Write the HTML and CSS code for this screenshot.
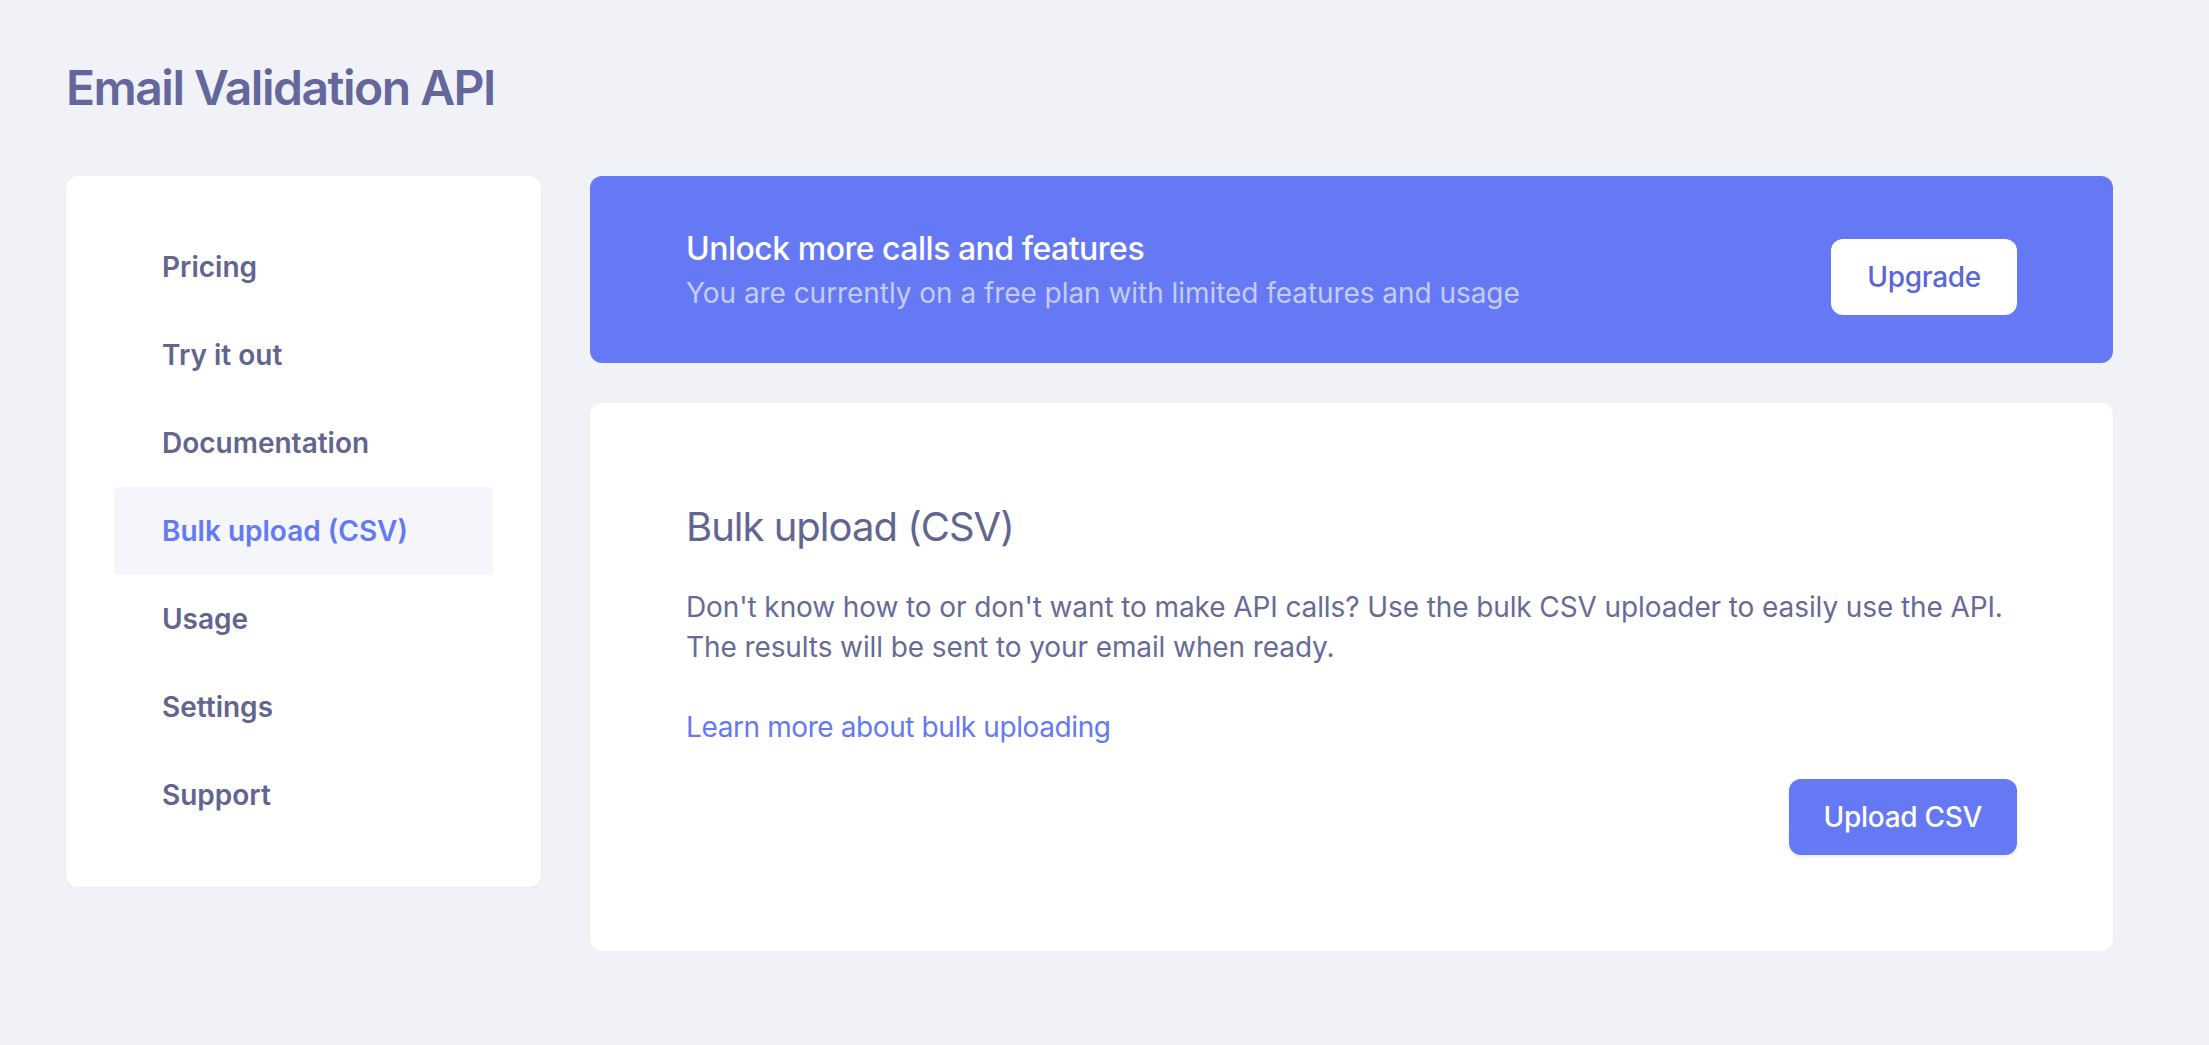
FILE: index.html
```html
<!DOCTYPE html>
<html lang="en">

<head>
  <meta charset="UTF-8">
  <meta name="viewport" content="width=device-width, initial-scale=1.0">
  <title>Email Validation API</title>
  <link rel="stylesheet" href="styles.css">
</head>

<body>
  <div class="page">
    <h1 class="page-title">Email Validation API</h1>

    <div class="layout">
      <nav class="sidebar">
        <a class="nav-item" href="#">Pricing</a>
        <a class="nav-item" href="#">Try it out</a>
        <a class="nav-item" href="#">Documentation</a>
        <a class="nav-item active" href="#">Bulk upload (CSV)</a>
        <a class="nav-item" href="#">Usage</a>
        <a class="nav-item" href="#">Settings</a>
        <a class="nav-item" href="#">Support</a>
      </nav>

      <div class="main">
        <div class="upgrade-banner">
          <div>
            <div class="banner-title">Unlock more calls and features</div>
            <div class="banner-text">You are currently on a free plan with limited features and usage</div>
          </div>
          <button class="btn-upgrade">Upgrade</button>
        </div>

        <div class="card">
          <h2 class="card-title">Bulk upload (CSV)</h2>
          <p class="card-text">
            Don't know how to or don't want to make API calls? Use the bulk CSV uploader to easily use the API.<br>
            The results will be sent to your email when ready.
          </p>
          <a class="card-link" href="#">Learn more about bulk uploading</a>
          <div class="card-actions">
            <button class="btn-primary">Upload CSV</button>
          </div>
        </div>
      </div>
    </div>
  </div>
</body>

</html>
```

FILE: styles.css
```css
body {
  margin: 0;
  background-color: #f0f2f7;
  font-family: "Inter", "Noto Sans", sans-serif;
  color: #62668f;
}

.page {
  width: 2047px;
  padding: 56px 0 0 66px;
}

.page-title {
  margin: 0 0 56px;
  font-size: 48px;
  line-height: 64px;
  font-weight: 600;
  letter-spacing: -1.5px;
  color: #63679a;
}

.layout {
  display: flex;
  align-items: flex-start;
  gap: 49px;
}

/* Sidebar */
.sidebar {
  width: 475px;
  box-sizing: border-box;
  padding: 47px 48px 48px;
  background-color: white;
  border-radius: 12px;
  box-shadow: 0 1px 3px rgba(30, 40, 90, 0.04);
}

.nav-item {
  display: block;
  padding: 24px 48px;
  font-size: 28px;
  line-height: 40px;
  font-weight: 600;
  color: #62668f;
  text-decoration: none;
  border-radius: 4px;
}

.nav-item.active {
  background-color: #f5f6fb;
  color: #6479f3;
}

/* Main column */
.main {
  flex: 1;
  display: flex;
  flex-direction: column;
  gap: 40px;
}

.upgrade-banner {
  display: flex;
  justify-content: space-between;
  align-items: center;
  padding: 49px 96px 50px;
  background-color: #6479f3;
  border-radius: 12px;
}

.banner-title {
  font-size: 32px;
  line-height: 48px;
  font-weight: 500;
  letter-spacing: -0.5px;
  color: white;
}

.banner-text {
  font-size: 28px;
  line-height: 40px;
  letter-spacing: -0.05px;
  color: #c5ccfb;
}

.btn-upgrade {
  margin: 8px 0 -8px;
  padding: 18px 36px;
  border: none;
  border-radius: 12px;
  background-color: white;
  color: #5a67d8;
  font-family: inherit;
  font-size: 28px;
  line-height: 40px;
  font-weight: 500;
  letter-spacing: -0.3px;
  cursor: pointer;
}

.card {
  padding: 96px;
  background-color: white;
  border-radius: 12px;
  box-shadow: 0 1px 3px rgba(30, 40, 90, 0.04);
}

.card-title {
  margin: 0 0 32px;
  font-size: 40px;
  line-height: 56px;
  font-weight: 400;
  letter-spacing: -1px;
  color: #62668f;
}

.card-text {
  margin: 0 0 40px;
  font-size: 28px;
  line-height: 40px;
  letter-spacing: -0.1px;
  color: #676b96;
}

.card-link {
  display: block;
  font-size: 28px;
  line-height: 40px;
  letter-spacing: -0.4px;
  color: #6479f3;
  text-decoration: none;
}

.card-actions {
  display: flex;
  justify-content: flex-end;
  margin-top: 32px;
}

.btn-primary {
  padding: 18px 35px;
  border: none;
  border-radius: 12px;
  background-color: #6479f3;
  color: white;
  font-family: inherit;
  font-size: 28px;
  line-height: 40px;
  font-weight: 500;
  letter-spacing: -0.3px;
  box-shadow: 0 2px 4px rgba(40, 50, 120, 0.1);
  cursor: pointer;
}
```
